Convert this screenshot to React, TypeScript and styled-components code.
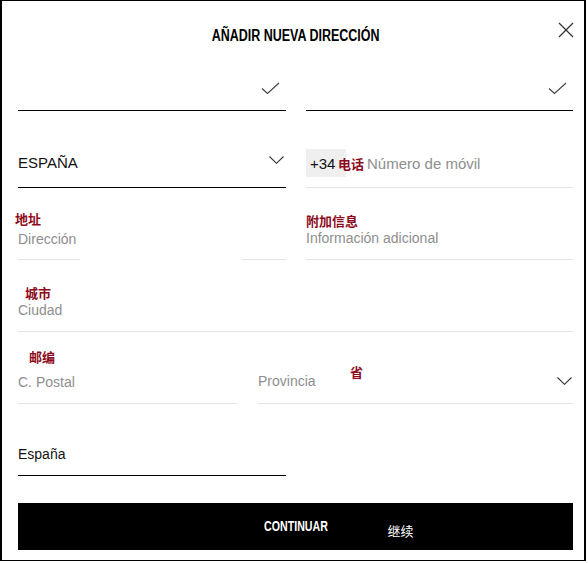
import React from "react";
import styled, { createGlobalStyle } from "styled-components";

const Global = createGlobalStyle`
  html, body { margin: 0; padding: 0; background: #fff; }
  body { font-family: "Liberation Sans", Arial, sans-serif; color: #111; }
  * { box-sizing: border-box; }
`;

const CJK = `"Noto Sans CJK SC", "Liberation Sans", sans-serif`;
const BOLD = `"Liberation Sans", Arial, sans-serif`;

const Frame = styled.div`
  width: 586px;
  height: 561px;
  border-style: solid;
  border-color: #000;
  border-width: 1px 2px 1px 2px;
  padding: 0 11px 0 16px;
  display: flex;
  flex-direction: column;
  background: #fff;
`;

const Header = styled.header`
  display: grid;
  grid-template-columns: 1fr auto 1fr;
  align-items: start;
  height: 70px;
  padding-top: 26px;
`;

const Title = styled.h1`
  grid-column: 2;
  margin: 0;
  display: inline-block;
  font-family: ${BOLD};
  font-weight: 700;
  font-size: 16px;
  line-height: 18px;
  color: #000;
  transform: scaleX(0.78);
  transform-origin: center;
`;

const CloseButton = styled.button`
  grid-column: 3;
  justify-self: end;
  margin: -5px -1px 0 0;
  padding: 0;
  border: 0;
  background: none;
  width: 16px;
  height: 16px;
  display: flex;
  cursor: pointer;
`;

const Row = styled.div<{ $h: number }>`
  display: grid;
  grid-template-columns: 268px 267px;
  column-gap: 20px;
  height: ${(p) => p.$h}px;
`;

const WideRow = styled.div<{ $h: number }>`
  display: flex;
  gap: 21px;
  height: ${(p) => p.$h}px;
`;

const Field = styled.div<{ $line: "dark" | "light" | "split"; $pb: number; $w?: number; $grow?: boolean }>`
  position: relative;
  display: flex;
  flex-direction: column;
  justify-content: flex-end;
  padding-bottom: ${(p) => p.$pb}px;
  ${(p) => (p.$w ? `width: ${p.$w}px; flex: none;` : "")}
  ${(p) => (p.$grow ? "flex: 1;" : "")}
  border-bottom: ${(p) =>
    p.$line === "dark" ? "1px solid #000" : p.$line === "light" ? "1px solid #e4e4e4" : "0"};
  ${(p) =>
    p.$line === "split"
      ? `background: linear-gradient(to right, #e4e4e4 0 62px, transparent 62px 224px, #e4e4e4 224px) left bottom / 100% 1px no-repeat;`
      : ""}
`;

const CheckField = styled.div`
  display: flex;
  justify-content: flex-end;
  align-items: flex-start;
  padding: 11px 6px 0 0;
  border-bottom: 1px solid #000;
`;

const InlineRow = styled.div`
  display: flex;
  align-items: flex-end;
  justify-content: space-between;
`;

const Value = styled.span<{ $size?: number }>`
  font-size: ${(p) => p.$size ?? 14}px;
  line-height: 20px;
  color: #111;
`;

const Placeholder = styled.span<{ $size?: number }>`
  font-size: ${(p) => p.$size ?? 14}px;
  line-height: 20px;
  color: #8e8e8e;
`;

const Tag = styled.span<{ $ml?: number; $mb?: number }>`
  align-self: flex-start;
  font-family: ${CJK};
  font-weight: 700;
  font-size: 13px;
  line-height: 16px;
  color: #8d0b20;
  margin-left: ${(p) => p.$ml ?? 0}px;
  margin-bottom: ${(p) => p.$mb ?? 0}px;
  white-space: nowrap;
`;

const FloatTag = styled(Tag)`
  position: absolute;
  left: 92px;
  top: 33px;
  line-height: 13px;
`;

const Chevron = styled.svg<{ $mb: number; $mr: number }>`
  flex: none;
  align-self: flex-end;
  margin-bottom: ${(p) => p.$mb}px;
  margin-right: ${(p) => p.$mr}px;
`;

const PhoneLine = styled.div`
  display: flex;
  align-items: baseline;
`;

const Prefix = styled.span`
  width: 40px;
  height: 28px;
  flex: none;
  padding-left: 4px;
  background: #efefef;
  font-size: 15px;
  line-height: 29px;
  color: #111;
`;

const PhoneTag = styled(Tag)`
  align-self: baseline;
  margin-left: -8px;
  margin-right: 3px;
  line-height: 20px;
`;

const Button = styled.button`
  margin-top: 27px;
  height: 47px;
  width: 555px;
  padding: 15px 0 0;
  border: 0;
  background: #000;
  color: #fff;
  display: grid;
  grid-template-columns: 1fr auto 1fr;
  align-items: start;
  cursor: pointer;
`;

const ButtonLabel = styled.span`
  grid-column: 2;
  display: inline-block;
  font-family: ${BOLD};
  font-weight: 700;
  font-size: 14px;
  line-height: 16px;
  transform: scaleX(0.76);
  transform-origin: center;
`;

const ButtonNote = styled.span`
  grid-column: 3;
  justify-self: start;
  margin: 5px 0 0 50px;
  font-family: ${CJK};
  font-size: 13px;
  line-height: 16px;
  color: #fff;
`;

const CheckIcon = () => (
  <svg width="19" height="13" viewBox="0 0 19 13" fill="none">
    <polyline points="1,6.5 6.5,11.5 18,1" stroke="#444" strokeWidth="1.2" />
  </svg>
);

const ChevronIcon = ({ mb, mr = 2 }: { mb: number; mr?: number }) => (
  <Chevron $mb={mb} $mr={mr} width="15" height="8" viewBox="0 0 15 8" fill="none">
    <polyline points="0.5,0.5 7.5,7.3 14.5,0.5" stroke="#333" strokeWidth="1.1" />
  </Chevron>
);

export default function App() {
  return (
    <>
      <Global />
      <Frame>
        <Header>
          <Title>AÑADIR NUEVA DIRECCIÓN</Title>
          <CloseButton aria-label="Cerrar">
            <svg width="16" height="16" viewBox="0 0 16 16" fill="none">
              <line x1="1" y1="1" x2="15" y2="15" stroke="#333" strokeWidth="1.2" />
              <line x1="15" y1="1" x2="1" y2="15" stroke="#333" strokeWidth="1.2" />
            </svg>
          </CloseButton>
        </Header>

        <Row $h={40}>
          <CheckField>
            <CheckIcon />
          </CheckField>
          <CheckField>
            <CheckIcon />
          </CheckField>
        </Row>

        <Row $h={77}>
          <Field $line="dark" $pb={14}>
            <InlineRow>
              <Value $size={15}>ESPAÑA</Value>
              <ChevronIcon mb={9} />
            </InlineRow>
          </Field>
          <Field $line="light" $pb={10}>
            <PhoneLine>
              <Prefix>+34</Prefix>
              <PhoneTag>电话</PhoneTag>
              <Placeholder $size={15}>Número de móvil</Placeholder>
            </PhoneLine>
          </Field>
        </Row>

        <Row $h={72}>
          <Field $line="split" $pb={11}>
            <Tag $ml={-3} $mb={2}>地址</Tag>
            <Placeholder>Dirección</Placeholder>
          </Field>
          <Field $line="light" $pb={11}>
            <Tag $mb={-1}>附加信息</Tag>
            <Placeholder>Información adicional</Placeholder>
          </Field>
        </Row>

        <WideRow $h={72}>
          <Field $line="light" $pb={11} $grow>
            <Tag $ml={7} $mb={-1}>城市</Tag>
            <Placeholder>Ciudad</Placeholder>
          </Field>
        </WideRow>

        <WideRow $h={72}>
          <Field $line="light" $pb={11} $w={219}>
            <Tag $ml={11} $mb={7}>邮编</Tag>
            <Placeholder>C. Postal</Placeholder>
          </Field>
          <Field $line="light" $pb={12} $grow>
            <FloatTag>省</FloatTag>
            <InlineRow>
              <Placeholder>Provincia</Placeholder>
              <ChevronIcon mb={6} mr={1} />
            </InlineRow>
          </Field>
        </WideRow>

        <Row $h={72}>
          <Field $line="dark" $pb={11}>
            <Value>España</Value>
          </Field>
        </Row>

        <Button>
          <ButtonLabel>CONTINUAR</ButtonLabel>
          <ButtonNote>继续</ButtonNote>
        </Button>
      </Frame>
    </>
  );
}
